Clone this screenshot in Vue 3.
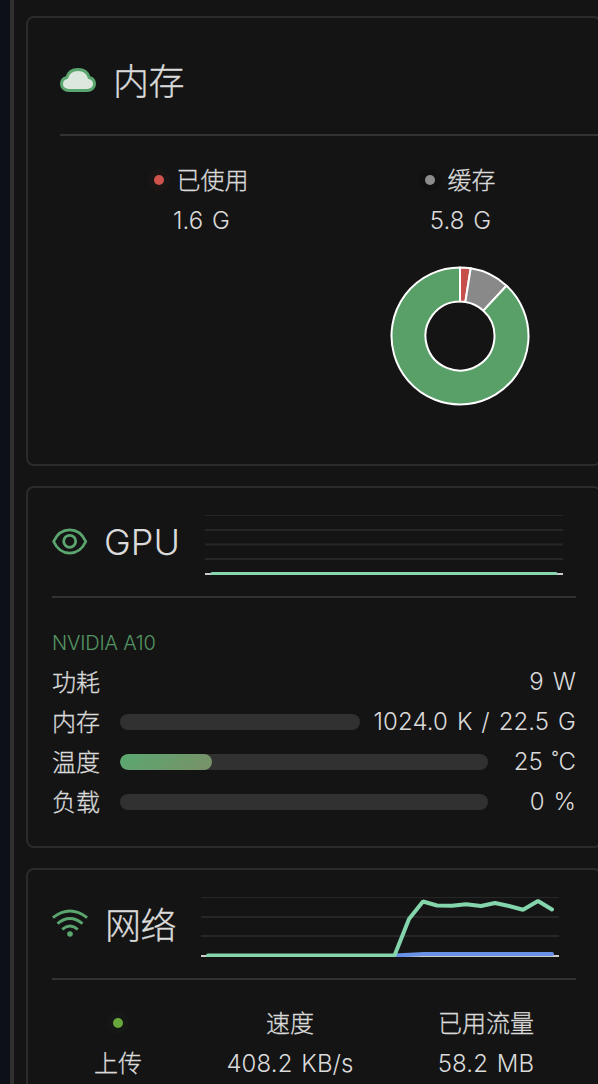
<script setup>
const stats = [
  { label: '已使用', value: '1.6 G', tone: 'red' },
  { label: '缓存', value: '5.8 G', tone: 'grey' },
]
const meters = [
  { label: '内存', value: '1024.0 K / 22.5 G', percent: 0, wide: true },
  { label: '温度', value: '25 ˚C', percent: 25 },
  { label: '负载', value: '0 %', percent: 0 },
]
</script>

<template>
  <div class="page">
    <main class="panel">
      <section class="card memory">
        <header class="head">
          <svg class="icon" viewBox="0 0 36 36">
            <path d="M9 28.5C4.7 28.5 1.5 25.7 1.5 22c0-3.5 2-5.7 5.3-6.5C8.2 10.500 12.5 7.500 18 7.500s9.8 3 11.2 8c3.300.800 5.300 3 5.300 6.500 0 3.700-3.200 6.500-7.500 6.500Z" fill="#dce8de" stroke="#5ba56f" stroke-width="3" stroke-linejoin="round" />
          </svg>
          <h2>内存</h2>
        </header>
        <div class="stats">
          <div v-for="s in stats" :key="s.label" class="stat">
            <div class="legend"><i class="dot" :class="s.tone"></i><span>{{ s.label }}</span></div>
            <div class="latin">{{ s.value }}</div>
          </div>
        </div>
        <svg class="donut" viewBox="-70 -70 140 140" stroke="#fff" stroke-width="2" stroke-linejoin="round">
          <path fill="#c64f4b" d="M0-68.500A68.500 68.500 0 0 1 10.700-67.660L5.360-34.080A34.500 34.500 0 0 0 0-34.500Z" />
          <path fill="#898989" d="M10.700-67.660A68.500 68.500 0 0 1 46.500-50.300L23.400-25.350A34.500 34.500 0 0 0 5.360-34.080Z" />
          <path fill="#589f68" d="M46.500-50.300A68.500 68.500 0 1 1 0-68.500V-34.500A34.500 34.500 0 1 0 23.400-25.350Z" />
        </svg>
      </section>

      <section class="card gpu">
        <header class="head">
          <svg class="icon" viewBox="0 0 36 36" fill="none" stroke="#5ba56f" stroke-width="2.8">
            <path d="M1.600 17.500C5.300 9.500 11 5.900 17.700 5.900S30.100 9.500 33.800 17.500C30.100 25.500 24.400 29.100 17.700 29.100S5.300 25.500 1.600 17.500Z" stroke-linejoin="round" />
            <circle cx="17.700" cy="17.300" r="6" />
          </svg>
          <h2>GPU</h2>
          <svg class="chart" viewBox="0 0 358 60">
            <g fill="#262626">
              <rect width="358" height="1" />
              <rect y="14" width="358" height="2" />
              <rect y="28.500" width="358" height="2" />
              <rect y="43" width="358" height="2" />
            </g>
            <rect y="58" width="358" height="2" fill="#ccc" />
            <path d="M7 58.500H351" stroke="#87d4ad" stroke-width="3" stroke-linecap="round" />
          </svg>
        </header>
        <div class="model">NVIDIA A10</div>
        <div class="row"><span>功耗</span><span class="latin value">9 W</span></div>
        <div v-for="m in meters" :key="m.label" class="row">
          <span>{{ m.label }}</span>
          <div class="track"><div class="fill" :style="{ width: m.percent + '%' }"></div></div>
          <span class="latin value" :class="{ wide: m.wide }">{{ m.value }}</span>
        </div>
      </section>

      <section class="card network">
        <header class="head">
          <svg class="icon" viewBox="0 0 36 36" fill="none" stroke="#5ba56f" stroke-width="2.900">
            <path d="M.900 11.700Q18-1.500 35.100 11.700M5.500 17.700Q18 7.500 30.500 17.700M10.200 23.300Q18 16.700 25.800 23.300" />
            <circle cx="18" cy="28" r="2.800" fill="#5ba56f" stroke="none" />
          </svg>
          <h2>网络</h2>
          <svg class="chart" viewBox="0 0 358 60">
            <g fill="#262626">
              <rect width="358" height="1" />
              <rect y="19" width="358" height="2" />
              <rect y="38" width="358" height="2" />
            </g>
            <rect y="58" width="358" height="2" fill="#ccc" />
            <g fill="none" stroke-width="4" stroke-linecap="round" stroke-linejoin="bevel">
              <path d="M194 58.500L223 57H351" stroke="#6991e8" />
              <path d="M7 58.500H193.500L208 22L222 4.500L236 8.500L251 8.700L265 7.200L280 9L294 6L308 9L322 12.700L337 4L351 12.500" stroke="#84d5ac" stroke-width="4" />
            </g>
          </svg>
        </header>
        <div class="traffic">
          <span><i class="dot green"></i></span>
          <span>速度</span>
          <span>已用流量</span>
          <span>上传</span>
          <span class="latin">408.2 KB/s</span>
          <span class="latin">58.2 MB</span>
        </div>
      </section>
    </main>
  </div>
</template>

<style>
html, body { margin: 0; overflow: hidden; background: #141414; }
</style>

<style scoped>
* { box-sizing: border-box; }
.page {
  height: 1084px;
  overflow: hidden;
  padding-left: 10px;
  background: #0d1017;
  color: #dadada;
  font: 300 24px/40px Inter, "Noto Sans CJK SC", sans-serif;
  -webkit-text-stroke: 0.3px currentColor;
}
.panel {
  height: 1084px;
  padding: 16px 0 0 12px;
  border-left: 4px solid #303030;
  background: #141414;
}
.card {
  width: 576px;
  margin-bottom: 20px;
  padding: 0 24px;
  border: 2px solid #2b2b2b;
  border-radius: 8px;
}
.memory { height: 450px; padding: 0 0 0 32px; }
.gpu { height: 362px; }
.network { height: 300px; }
.head {
  display: flex;
  align-items: center;
  height: 110px;
  border-bottom: 2px solid #323232;
}
.memory .head { height: 118px; padding-top: 11px; }
.icon { flex: none; width: 36px; height: 36px; margin-right: 17px; }
h2 { margin: 0; font-size: 36px; font-weight: 300; line-height: 54px; white-space: nowrap; letter-spacing: -0.5px; }
.gpu h2 { width: 101px; margin-left: -1px; letter-spacing: 0; -webkit-text-stroke: 0; }
.network h2 { width: 96px; padding-top: 3px; }
.memory .icon { margin-top: -4px; }
.latin { letter-spacing: 0.1px; word-spacing: 2px; -webkit-text-stroke: 0; }
.chart { flex: none; width: 358px; height: 60px; margin-top: 6px; }
.stats { display: flex; padding: 24px 0 0 12px; }
.stat { width: 259px; text-align: center; }
.legend { display: flex; align-items: center; justify-content: center; }
.dot {
  display: inline-block;
  width: 10px;
  height: 10px;
  margin: -2px 13px 0 0;
  border-radius: 50%;
}
.legend span { margin-right: 1px; padding-top: 1px; }
.red { background: #cf534d; box-shadow: 0 0 0 6px #cf534d08; }
.grey { background: #8c8c8c; box-shadow: 0 0 0 6px #0002; }
.green { margin: 0; background: #68a83c; box-shadow: 0 0 0 6px #68a83c08; }
.donut { display: block; width: 140px; height: 140px; margin: 25px 0 0 330px; }
.model { height: 64px; padding-top: 25px; color: #559563; font-size: 20px; letter-spacing: -0.2px; -webkit-text-stroke: 0; }
.row { display: flex; align-items: center; height: 40px; white-space: nowrap; }
.row > span:first-child { width: 68px; padding-top: 1px; }
.value { margin-left: auto; min-width: 88px; text-align: right; }
.wide { width: 216px; }
.track { flex: 1; height: 16px; overflow: hidden; border-radius: 8px; background: #313131; }
.fill { height: 16px; border-radius: 8px; background: linear-gradient(135deg, #59a870, #7a9068); }
.traffic {
  display: grid;
  grid-template-columns: 132px 212px 180px;
  grid-auto-rows: 40px;
  padding-top: 24px;
  text-align: center;
}
.traffic .dot { vertical-align: 4px; }
</style>
